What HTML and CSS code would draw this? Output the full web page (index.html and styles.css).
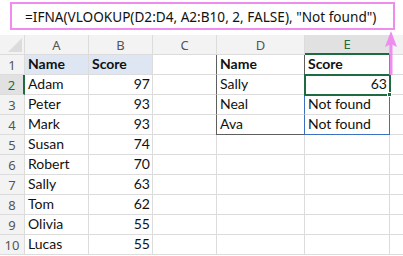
FILE: index.html
```html
<!DOCTYPE html>
<html>
<head>
<meta charset="utf-8">
<link rel="stylesheet" href="styles.css">
</head>
<body>
<div class="formula-area">
  <div class="formula-box"><span class="formula-text">=IFNA(VLOOKUP(D2:D4, A2:B10, 2, FALSE), "Not found")</span></div>
</div>
<div class="sheet">
  <div class="grid">
    <div class="corner"><span class="corner-tri"></span></div>
    <div class="colhead">A</div>
    <div class="colhead">B</div>
    <div class="colhead">C</div>
    <div class="colhead">D</div>
    <div class="colhead active">E</div>
    <div class="colhead last"></div>

    <div class="rowhead">1</div>
    <div class="cell hl bold">Name</div>
    <div class="cell hl bold">Score</div>
    <div class="cell"></div>
    <div class="cell bold t-left">Name</div>
    <div class="cell bold t-right">Score</div>
    <div class="cell last"></div>

    <div class="rowhead sel">2</div>
    <div class="cell">Adam</div>
    <div class="cell num">97</div>
    <div class="cell"></div>
    <div class="cell t-left">Sally</div>
    <div class="cell num t-right picked">63</div>
    <div class="cell last"></div>

    <div class="rowhead">3</div>
    <div class="cell">Peter</div>
    <div class="cell num">93</div>
    <div class="cell"></div>
    <div class="cell t-left t-blue">Neal</div>
    <div class="cell res">Not found</div>
    <div class="cell last"></div>

    <div class="rowhead">4</div>
    <div class="cell">Mark</div>
    <div class="cell num">93</div>
    <div class="cell"></div>
    <div class="cell t-left t-blue t-bottom">Ava</div>
    <div class="cell res res-end">Not found</div>
    <div class="cell last"></div>

    <div class="rowhead">5</div>
    <div class="cell">Susan</div>
    <div class="cell num">74</div>
    <div class="cell"></div><div class="cell"></div><div class="cell"></div><div class="cell last"></div>

    <div class="rowhead">6</div>
    <div class="cell">Robert</div>
    <div class="cell num">70</div>
    <div class="cell"></div><div class="cell"></div><div class="cell"></div><div class="cell last"></div>

    <div class="rowhead">7</div>
    <div class="cell">Sally</div>
    <div class="cell num">63</div>
    <div class="cell"></div><div class="cell"></div><div class="cell"></div><div class="cell last"></div>

    <div class="rowhead">8</div>
    <div class="cell">Tom</div>
    <div class="cell num">62</div>
    <div class="cell"></div><div class="cell"></div><div class="cell"></div><div class="cell last"></div>

    <div class="rowhead">9</div>
    <div class="cell">Olivia</div>
    <div class="cell num">55</div>
    <div class="cell"></div><div class="cell"></div><div class="cell"></div><div class="cell last"></div>

    <div class="rowhead">10</div>
    <div class="cell">Lucas</div>
    <div class="cell num">55</div>
    <div class="cell"></div><div class="cell"></div><div class="cell"></div><div class="cell last"></div>
  </div>
</div>
<svg class="pointer" width="16" height="48" viewBox="0 0 16 48">
  <line x1="8" y1="12" x2="8" y2="46" stroke="#ef8cef" stroke-width="3"/>
  <polygon points="8,2 2,18 8,15 14,18" fill="#ef8cef"/>
</svg>
</body>
</html>
```

FILE: styles.css
```css
html, body {
  margin: 0;
  padding: 0;
  background: #ffffff;
}

body {
  width: 403px;
  height: 256px;
  overflow: hidden;
  position: relative;
}

/* formula bar */
.formula-area {
  height: 35px;
  padding: 2px 0 0 10px;
  box-sizing: border-box;
}

.formula-box {
  width: 385px;
  height: 28px;
  box-sizing: border-box;
  border: 2.5px solid #ef8cef;
  display: flex;
  align-items: center;
  padding-left: 13px;
}

.formula-text {
  font-family: "Noto Sans", sans-serif;
  font-size: 13.6px;
  color: #111;
  white-space: nowrap;
}

/* worksheet grid */
.grid {
  display: grid;
  grid-template-columns: 25px 64px 64px 64px 88px 85px 1fr;
  grid-auto-rows: 20px;
  font-family: "Lato", sans-serif;
  font-size: 14px;
  color: #111;
}

.grid > div {
  box-sizing: border-box;
  border-right: 1px solid #dcdcdc;
  border-bottom: 1px solid #dcdcdc;
}

.corner {
  background: #f3f3f3;
  position: relative;
}

.corner-tri {
  position: absolute;
  right: 2px;
  bottom: 2px;
  width: 0;
  height: 0;
  border-left: 14px solid transparent;
  border-bottom: 14px solid #dcdcdc;
}

.colhead {
  background: #f3f3f3;
  color: #555;
  display: flex;
  align-items: center;
  justify-content: center;
  font-family: "Noto Sans", sans-serif;
  font-size: 13px;
}

.colhead.active {
  background: #e1e1e1;
  color: #1e6b41;
  border-bottom: 2px solid #1e6b41 !important;
}

.rowhead {
  background: #f3f3f3;
  color: #555;
  display: flex;
  align-items: center;
  justify-content: center;
  font-family: "Noto Sans", sans-serif;
  font-size: 13px;
  padding-top: 1px;
}

.rowhead.sel {
  background: #e1e1e1;
  color: #1e6b41;
  border-right: 2px solid #1e6b41 !important;
}

.cell {
  display: flex;
  align-items: flex-end;
  padding: 0 2px 2px 3px;
  white-space: nowrap;
  line-height: 16px;
}

.cell.num {
  justify-content: flex-end;
}

.cell.bold {
  font-weight: 700;
}

.cell.hl {
  background: #dde6f2;
}

.grid > .last {
  border-right: none;
}

/* lookup table outline */
.grid > .t-left {
  border-left: 1px solid #5e5e5e;
  border-right: 1px solid #5e5e5e;
  margin-left: -1px;
}

.grid > .t-blue {
  border-right-color: #3d6fc2;
}

.grid > .t-bottom {
  border-bottom: 1px solid #5e5e5e;
}

.grid > .t-right {
  border-right: 1px solid #5e5e5e;
}

.grid > .res {
  border-right: 1px solid #3d6fc2;
  border-bottom: 1px solid #dcdcdc;
}

.grid > .res-end {
  border-bottom: 1px solid #3d6fc2;
}

/* active cell */
.picked {
  position: relative;
  outline: 2px solid #1e6b41;
  outline-offset: -1px;
  z-index: 2;
}

.picked::after {
  content: "";
  position: absolute;
  right: -3px;
  bottom: -3px;
  width: 5px;
  height: 5px;
  background: #1e6b41;
  border: 1px solid #fff;
  box-sizing: border-box;
}

.pointer {
  position: absolute;
  left: 383px;
  top: 29px;
  z-index: 5;
}
```
